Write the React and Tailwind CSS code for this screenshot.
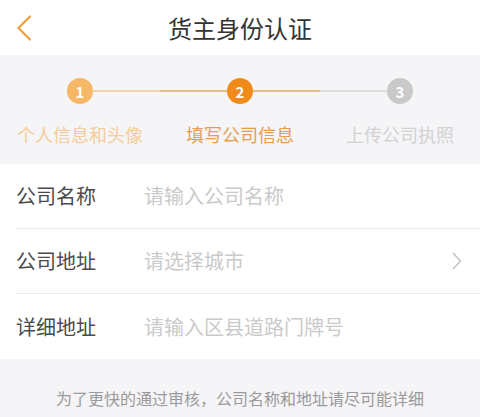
const steps = [
  {
    n: 1,
    label: "个人信息和头像",
    circle: "bg-[#f6b866]",
    text: "text-[#f4cd98]",
    left: "",
    right: "bg-[#f5d3a8]",
  },
  {
    n: 2,
    label: "填写公司信息",
    circle: "bg-[#f08a18]",
    text: "text-[#e39f4f]",
    left: "bg-[#e8bb84]",
    right: "bg-[#e8bb84]",
  },
  {
    n: 3,
    label: "上传公司执照",
    circle: "bg-[#c9c9c9]",
    text: "text-[#d2d2d2]",
    left: "bg-[#dddddd]",
    right: "",
  },
];

const fields = [
  { label: "公司名称", placeholder: "请输入公司名称" },
  { label: "公司地址", placeholder: "请选择城市", arrow: true },
  { label: "详细地址", placeholder: "请输入区县道路门牌号" },
];

function Step({ step }) {
  return (
    <div className="relative flex w-1/3 flex-col items-center">
      {step.left && (
        <div className={`absolute left-0 top-[12px] h-[2px] w-1/2 ${step.left}`} />
      )}
      {step.right && (
        <div className={`absolute right-0 top-[12px] h-[2px] w-1/2 ${step.right}`} />
      )}
      <div
        className={`relative flex h-[26px] w-[26px] items-center justify-center rounded-full text-[15px] font-semibold leading-none text-white ${step.circle}`}
      >
        {step.n}
      </div>
      <div className={`mt-[21px] whitespace-nowrap text-[18px] leading-[18px] ${step.text}`}>
        {step.label}
      </div>
    </div>
  );
}

export default function App() {
  return (
    <div
      className="h-[417px] w-[480px] overflow-hidden bg-[#f5f4f7]"
      style={{ fontFamily: '"Noto Sans CJK SC", "Noto Sans", sans-serif' }}
    >
      <header className="grid h-[55px] grid-cols-[60px_1fr_60px] items-center bg-white">
        <button className="flex items-center pl-[16px]">
          <svg width="16" height="26" viewBox="0 0 16 26" fill="none">
            <polyline
              points="14,1.5 2.5,13 14,24.5"
              stroke="#eb9f3e"
              strokeWidth="2.2"
              strokeLinecap="round"
              strokeLinejoin="round"
            />
          </svg>
        </button>
        <h1 className="text-center text-[24px] leading-none text-[#333333]">货主身份认证</h1>
        <div />
      </header>

      <section className="flex h-[109px] pt-[23px]">
        {steps.map((s) => (
          <Step key={s.n} step={s} />
        ))}
      </section>

      <section className="bg-white">
        {fields.map((f, i) => (
          <div key={f.label} className="pl-4">
            <div
              className={`flex h-[65px] items-center pr-[18px] ${
                i < fields.length - 1 ? "border-b border-[#ebebeb]" : ""
              }`}
            >
              <span className="w-[128px] text-[20px] leading-none text-[#4a4a4a]">{f.label}</span>
              <span className="flex-1 text-[20px] leading-none text-[#cacaca]">{f.placeholder}</span>
              {f.arrow && (
                <svg width="10" height="18" viewBox="0 0 10 18" fill="none">
                  <polyline
                    points="1.5,1.5 8.5,9 1.5,16.5"
                    stroke="#c4c4c4"
                    strokeWidth="1.6"
                    strokeLinecap="round"
                    strokeLinejoin="round"
                  />
                </svg>
              )}
            </div>
          </div>
        ))}
      </section>

      <p className="pt-[31px] text-center text-[16px] leading-4 text-[#9a9a9a]">
        为了更快的通过审核，公司名称和地址请尽可能详细
      </p>
    </div>
  );
}
